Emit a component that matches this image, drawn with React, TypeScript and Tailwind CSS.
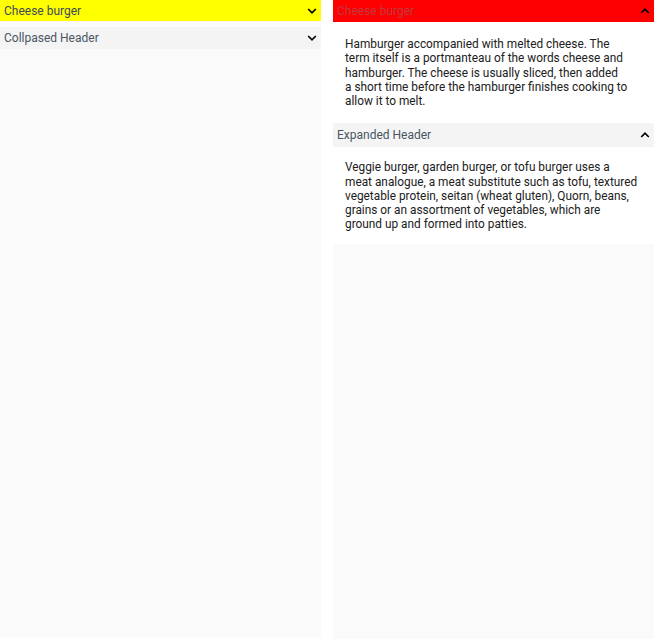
import React from 'react';

const font = { fontFamily: 'Roboto, "Noto Sans", sans-serif' };

const cheeseLines = [
  'Hamburger accompanied with melted cheese. The',
  'term itself is a portmanteau of the words cheese and',
  'hamburger. The cheese is usually sliced, then added',
  'a short time before the hamburger finishes cooking to',
  'allow it to melt.',
];

const veggieLines = [
  'Veggie burger, garden burger, or tofu burger uses a',
  'meat analogue, a meat substitute such as tofu, textured',
  'vegetable protein, seitan (wheat gluten), Quorn, beans,',
  'grains or an assortment of vegetables, which are',
  'ground up and formed into patties.',
];

function Chevron({ up }: { up?: boolean }) {
  return (
    <svg width="12" height="12" viewBox="0 0 12 12" className="shrink-0">
      <path
        d={up ? 'M2.2 8 L6 4.2 L9.8 8' : 'M2.2 4 L6 7.8 L9.8 4'}
        fill="none"
        stroke="#000"
        strokeWidth="1.7"
      />
    </svg>
  );
}

function Header({ title, bg, color, up, h }: { title: string; bg: string; color: string; up?: boolean; h: string }) {
  return (
    <div className={`flex items-center justify-between pl-[4px] pr-[3px] ${bg} ${h}`}>
      <span className={`text-[12px] ${color}`}>{title}</span>
      <Chevron up={up} />
    </div>
  );
}

function Body({ lines, pt, pb }: { lines: string[]; pt: string; pb: string }) {
  return (
    <div className={`bg-white pl-[12px] pr-[4px] text-[11.85px] leading-[14.25px] text-[#212121] whitespace-nowrap ${pt} ${pb}`}>
      {lines.map((l) => (
        <div key={l}>{l}</div>
      ))}
    </div>
  );
}

export default function App() {
  return (
    <div className="flex h-[639px] w-[654px] bg-white" style={font}>
      <div className="w-[321px] h-[637px] bg-[#fafafa] flex flex-col">
        <Header title="Cheese burger" bg="bg-[#ffff00]" color="text-[#3f4a57]" h="h-[21px]" />
        <div className="mt-[6px]">
          <Header title="Collpased Header" bg="bg-[#f4f4f4]" color="text-[#4a5563]" h="h-[22px]" />
        </div>
      </div>
      <div className="ml-[12px] w-[321px] h-[639px] bg-[#fafafa] flex flex-col">
        <Header title="Cheese burger" bg="bg-[#ff0000]" color="text-[#c0393f]" up h="h-[22px]" />
        <Body lines={cheeseLines} pt="pt-[15px]" pb="pb-[15px]" />
        <Header title="Expanded Header" bg="bg-[#f4f4f4]" color="text-[#4a5563]" up h="h-[24px]" />
        <Body lines={veggieLines} pt="pt-[13px]" pb="pb-[12px]" />
      </div>
    </div>
  );
}
